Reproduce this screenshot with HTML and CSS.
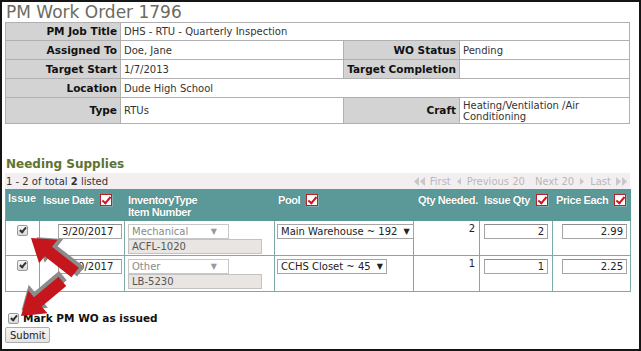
FILE: index.html
```html
<!DOCTYPE html>
<html lang="en">
	<head>
		<meta charset="UTF-8" />
		<title>PM Work Order 1796</title>
		<link rel="stylesheet" href="styles.css">
	</head>
	<body>
		<div class="frame">
			<h1 class="title">PM Work Order 1796</h1>

			<table class="info">
				<colgroup>
					<col style="width: 115px" />
					<col style="width: 223px" />
					<col style="width: 116px" />
					<col />
				</colgroup>
				<tr class="r1">
					<th>PM Job Title</th>
					<td colspan="3">DHS - RTU - Quarterly Inspection</td>
				</tr>
				<tr>
					<th>Assigned To</th>
					<td>Doe, Jane</td>
					<th>WO Status</th>
					<td>Pending</td>
				</tr>
				<tr>
					<th>Target Start</th>
					<td>1/7/2013</td>
					<th>Target Completion</th>
					<td></td>
				</tr>
				<tr>
					<th>Location</th>
					<td colspan="3">Dude High School</td>
				</tr>
				<tr class="tall">
					<th>Type</th>
					<td>RTUs</td>
					<th>Craft</th>
					<td>Heating/Ventilation /Air Conditioning</td>
				</tr>
			</table>

			<h2 class="section">Needing Supplies</h2>

			<div class="pager">
				<span>1 - 2 of total <b>2</b> listed</span>
				<span class="nav">
					<svg width="11" height="9" viewBox="0 0 11 9"><path d="M5 0v9L0 4.5zM11 0v9L6 4.5z" /></svg>
					<span>First</span>
					<svg width="6" height="9" viewBox="0 0 6 9"><path d="M5 1v7L1 4.5z" /></svg>
					<span>Previous 20</span>
					<span class="next">Next 20</span>
					<svg width="6" height="9" viewBox="0 0 6 9"><path d="M1 1v7l4-3.5z" /></svg>
					<span>Last</span>
					<svg width="11" height="9" viewBox="0 0 11 9"><path d="M0 0v9l5-4.5zM6 0v9l5-4.5z" /></svg>
				</span>
			</div>

			<table class="grid">
				<colgroup>
					<col style="width: 34px" />
					<col style="width: 85px" />
					<col style="width: 150px" />
					<col style="width: 139px" />
					<col style="width: 66px" />
					<col style="width: 73px" />
					<col style="width: 78px" />
				</colgroup>
				<thead>
					<tr>
						<th class="c-issue">Issue</th>
						<th>Issue Date <span class="chk"></span></th>
						<th>InventoryType<br />Item Number</th>
						<th>Pool <span class="chk"></span></th>
						<th class="c-qty">Qty Needed.</th>
						<th class="c-iq">Issue Qty <span class="chk"></span></th>
						<th class="c-price">Price Each <span class="chk"></span></th>
					</tr>
				</thead>
				<tbody>
					<tr class="row">
						<td class="c-issue"><input type="checkbox" class="cb" checked /></td>
						<td class="c-date"><span class="field date">3/20/2017</span></td>
						<td class="c-inv">
							<span class="sel off">Mechanical<i>▼</i></span>
							<span class="field ro">ACFL-1020</span>
						</td>
						<td class="c-pool"><span class="sel">Main Warehouse ~ 192<i>▼</i></span></td>
						<td class="c-qty">2</td>
						<td class="c-iq"><span class="field num">2</span></td>
						<td class="c-price"><span class="field num price">2.99</span></td>
					</tr>
					<tr class="row">
						<td class="c-issue"><input type="checkbox" class="cb" checked /></td>
						<td class="c-date"><span class="field date">3/20/2017</span></td>
						<td class="c-inv">
							<span class="sel off">Other<i>▼</i></span>
							<span class="field ro">LB-5230</span>
						</td>
						<td class="c-pool"><span class="sel">CCHS Closet ~ 45<i>▼</i></span></td>
						<td class="c-qty">1</td>
						<td class="c-iq"><span class="field num">1</span></td>
						<td class="c-price"><span class="field num price">2.25</span></td>
					</tr>
				</tbody>
			</table>

			<label class="mark"><input type="checkbox" class="cb" checked /> Mark PM WO as issued</label>
			<button class="submit">Submit</button>

			<svg class="arrows" width="641" height="351" viewBox="0 0 641 351">
				<g transform="translate(31 238) rotate(38)">
					<polygon class="shadow" transform="translate(4 -4)" points="0,0 22,-15 22,-6 56,-6 56,6 22,6 22,15" />
					<polygon class="red" points="0,0 22,-15 22,-6 56,-6 56,6 22,6 22,15" />
				</g>
				<g transform="translate(21 316) rotate(-40)">
					<polygon class="shadow" transform="translate(4 -4)" points="0,0 22,-15 22,-6 54,-6 54,6 22,6 22,15" />
					<polygon class="red" points="0,0 22,-15 22,-6 54,-6 54,6 22,6 22,15" />
				</g>
			</svg>
		</div>
	</body>
</html>
```

FILE: styles.css
```css
body {
	margin: 0;
	background-color: white;
	font-family: "DejaVu Sans", Verdana, sans-serif;
	font-size: 10px;
	color: #222;
}

.frame {
	position: relative;
	box-sizing: border-box;
	width: 641px;
	height: 351px;
	border: 2px solid #151515;
	padding: 0 3px;
	overflow: hidden;
}

.title {
	margin: 0;
	height: 20px;
	padding-left: 1px;
	font-size: 17px;
	font-weight: normal;
	line-height: 20px;
	color: #6b6b5e;
}

/* header info */

.info {
	width: 625px;
	border-collapse: collapse;
	table-layout: fixed;
	border: 1px solid #a8a8a8;
}

.info th,
.info td {
	border: 1px solid #b0b0b0;
	height: 18px;
	padding: 0 3px;
	line-height: 11px;
	vertical-align: middle;
}

.info th {
	background-color: #d3d3d3;
	text-align: right;
	font-weight: bold;
	font-size: 10.5px;
	color: #111;
}

.info td {
	text-align: left;
	color: #333;
}

.info .r1 th,
.info .r1 td {
	height: 17px;
}

.info .tall th,
.info .tall td {
	height: 25px;
}

/* supplies */

.section {
	margin: 0;
	padding: 32px 0 0 1px;
	height: 17px;
	font-size: 12px;
	line-height: 17px;
	color: #5e7231;
}

.pager {
	display: flex;
	justify-content: space-between;
	align-items: center;
	width: 625px;
	height: 16px;
	background-color: #f3eff1;
	padding: 0 3px 0 1px;
	box-sizing: border-box;
	color: #333;
}

.nav {
	display: flex;
	align-items: center;
	gap: 5px;
	color: #b8b8b8;
}

.nav svg {
	fill: #c8c8c8;
}

.nav .next {
	margin-left: 5px;
}

.grid {
	width: 625px;
	border-collapse: collapse;
	table-layout: fixed;
}

.grid th {
	height: 31px;
	box-sizing: border-box;
	background-color: #5b9898;
	border: 1px solid #5b9898;
	border-left-color: #6fa6a6;
	padding: 4px 3px 0;
	vertical-align: top;
	text-align: left;
	font-family: "Liberation Sans", Arial, sans-serif;
	font-size: 11px;
	font-weight: bold;
	line-height: 12px;
	letter-spacing: -0.4px;
	color: white;
	text-shadow: 0 0 1px #3e7070;
	white-space: nowrap;
}

.grid th.c-issue {
	padding: 2px 0 0 2px;
	letter-spacing: 0;
}

.grid th.c-qty {
	padding-left: 4px;
}

.grid th.c-iq {
	padding-left: 4px;
}

.chk {
	display: inline-block;
	width: 10px;
	height: 10px;
	margin-left: 3px;
	vertical-align: -2px;
	background-color: white;
	border: 1px solid #b3232a;
	box-shadow: 1px 1px 0 #8aa;
	position: relative;
}

.chk::after {
	content: "";
	position: absolute;
	left: 3px;
	top: 0;
	width: 3px;
	height: 7px;
	border: solid #d0141c;
	border-width: 0 2px 2px 0;
	transform: rotate(40deg);
}

.grid td {
	border: 1px solid #7fa8a8;
	padding: 3px 2px 0;
	vertical-align: top;
	height: 35px;
	box-sizing: border-box;
}

.grid .row + .row td {
	height: 36px;
}

.grid td.c-issue {
	text-align: center;
	padding: 4px 0 0;
}

.grid td.c-date {
	text-align: right;
	padding-right: 2px;
}

.grid td.c-inv {
	padding-left: 3px;
}

.grid td.c-qty {
	text-align: right;
	padding-right: 4px;
	padding-top: 2px;
}

.grid td.c-iq {
	padding-left: 4px;
}

.grid td.c-price {
	padding-left: 9px;
}

.field {
	display: block;
	box-sizing: border-box;
	height: 15px;
	border: 1px solid #a5a5a5;
	border-top-color: #8e8e8e;
	padding: 0 3px;
	line-height: 13px;
	text-align: left;
	background-color: white;
	color: #222;
}

.date {
	display: inline-block;
	width: 64px;
}

.num {
	width: 64px;
	text-align: right;
}

.price {
	width: 65px;
}

.ro {
	width: 134px;
	background-color: #e8e5e2;
	border-color: #c2c2c2;
	color: #555;
}

.sel {
	display: inline-flex;
	justify-content: space-between;
	align-items: center;
	gap: 6px;
	box-sizing: border-box;
	height: 15px;
	border: 1px solid #a5a5a5;
	padding: 0 3px;
	line-height: 13px;
	white-space: nowrap;
	color: #222;
	background-color: white;
}

.sel i {
	font-style: normal;
	font-size: 8px;
	color: #222;
}

.sel.off {
	width: 101px;
	border-color: #c8c8c8;
	color: #8a8a8a;
}

.sel.off i {
	color: #9a9a9a;
	padding-right: 8px;
}

/* checkbox */

.cb {
	appearance: none;
	-webkit-appearance: none;
	position: relative;
	width: 11px;
	height: 11px;
	margin: 0;
	border: 1px solid #9a9a9a;
	border-radius: 2px;
	background: linear-gradient(#f6f6f6, #d9d9d9);
	vertical-align: top;
}

.cb::after {
	content: "";
	position: absolute;
	left: 3px;
	top: 0;
	width: 2px;
	height: 5px;
	border: solid #333;
	border-width: 0 2px 2px 0;
	transform: rotate(40deg);
}

.mark {
	display: flex;
	align-items: center;
	gap: 4px;
	margin: 19px 0 0 3px;
	height: 14px;
	font-size: 10.5px;
	font-weight: bold;
	color: #111;
}

.submit {
	display: block;
	margin: 2px 0 0;
	height: 16px;
	padding: 0 4px;
	border: 1px solid #adadad;
	border-radius: 2px;
	background: linear-gradient(#f6f6f6, #e3e3e3);
	font-family: "DejaVu Sans", Verdana, sans-serif;
	font-size: 10px;
	line-height: 13px;
	color: #222;
}

.arrows {
	position: absolute;
	left: -2px;
	top: -2px;
	pointer-events: none;
}

.arrows .red {
	fill: #c5161d;
}

.arrows .shadow {
	fill: #8c8c8c;
}
```
